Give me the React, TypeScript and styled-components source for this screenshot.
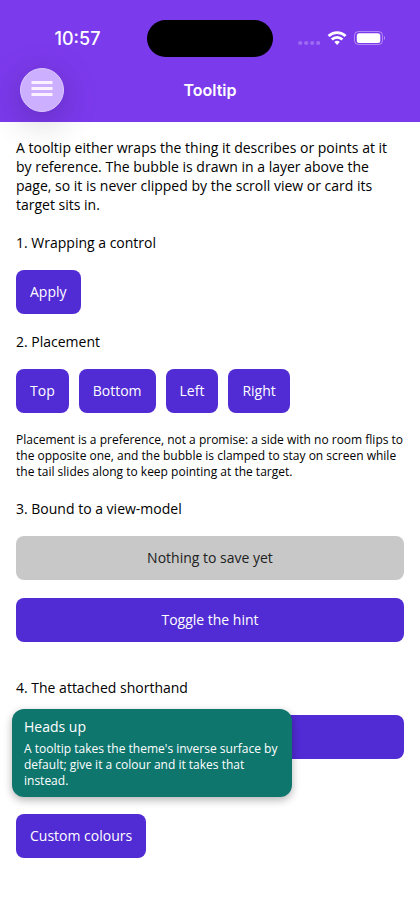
import React from "react";
import styled, { createGlobalStyle } from "styled-components";

const GlobalStyle = createGlobalStyle`
  *, *::before, *::after { box-sizing: border-box; }
  body {
    margin: 0;
    background: #ffffff;
    color: #000000;
    font-family: "Open Sans", sans-serif;
    font-size: 14px;
    line-height: 19px;
  }
  button { font: inherit; cursor: pointer; }
  h1, h2, p { margin: 0; font-size: inherit; font-weight: 400; }
`;

const Header = styled.header`
  background: #7c3aed;
  color: #ffffff;
  font-family: Inter, sans-serif;
  font-weight: 600;
`;

const StatusBar = styled.div`
  display: grid;
  grid-template-columns: 1fr 126px 1fr;
  align-items: center;
  padding-top: 20px;
`;

const Clock = styled.time`
  justify-self: center;
  padding-left: 8px;
  font-size: 18px;
  font-weight: 500;
  line-height: 20px;
`;

const Island = styled.div`
  height: 37px;
  border-radius: 19px;
  background: #000000;
`;

const Indicators = styled.div`
  display: flex;
  justify-content: flex-end;
  padding-right: 34px;
`;

const NavBar = styled.div`
  display: grid;
  grid-template-columns: 44px 1fr 44px;
  align-items: center;
  padding: 11px 20px 10px;
`;

const MenuButton = styled.button`
  display: grid;
  place-items: center;
  width: 44px;
  height: 44px;
  padding: 0 0 2px;
  border: 1px solid #dcc8ff;
  border-radius: 50%;
  background: #ccb0ff;
  box-shadow: 0 8px 36px rgba(0, 0, 0, 0.24);
`;

const Title = styled.h1`
  text-align: center;
  && {
    font-size: 16px;
    font-weight: 600;
  }
  line-height: 20px;
`;

const Content = styled.main`
  display: flex;
  flex-direction: column;
  gap: 18px;
  padding: 16px 16px 54px;
`;

const Intro = styled.p`
  padding-bottom: 1px;
`;

const Note = styled.p`
  padding: 1px 0;
  && {
    font-size: 12px;
  }
  line-height: 16px;
`;

const Button = styled.button<{ $muted?: boolean }>`
  min-height: 44px;
  padding: 0 14px 1px;
  border: 0;
  border-radius: 8px;
  background: ${(p) => (p.$muted ? "#c8c8c8" : "#512bd4")};
  color: ${(p) => (p.$muted ? "#212121" : "#ffffff")};
`;

const ButtonRow = styled.div`
  display: flex;
  flex-wrap: wrap;
  gap: 10px;
`;

const Section = styled.section<{ $spaced?: boolean }>`
  display: flex;
  flex-direction: column;
  gap: 18px;
  margin-top: ${(p) => (p.$spaced ? "18px" : "0")};
`;

const Target = styled.div`
  position: relative;
  align-self: flex-start;
  margin-top: 37px;
`;

const Bubble = styled.div`
  position: absolute;
  bottom: calc(100% + 17px);
  left: -4px;
  width: 280px;
  padding: 8px 12px;
  border-radius: 12px;
  background: #0f766e;
  color: #ffffff;
  box-shadow: 0 3px 8px rgba(0, 0, 0, 0.3);
`;

const BubbleText = styled.p`
  margin-top: 5px;
  && {
    font-size: 12px;
  }
  line-height: 16px;
`;

function StatusIcons() {
  return (
    <svg width="88" height="18" viewBox="0 0 88 18" fill="none" aria-hidden="true">
      <g fill="#ffffff" fillOpacity=".25">
        <circle cx="2.2" cy="13" r="2.1" />
        <circle cx="8.2" cy="13" r="2.1" />
        <circle cx="14.2" cy="13" r="2.1" />
        <circle cx="20.2" cy="13" r="2.1" />
      </g>
      <g stroke="#ffffff" strokeWidth="2.8">
        <path d="M30.6 6.1a12.3 12.3 0 0 1 17 0" />
        <path d="M33.8 9.4a7.7 7.7 0 0 1 10.6 0" />
      </g>
      <path d="M36.4 12a4 4 0 0 1 5.4 0L39.1 14.9Z" fill="#ffffff" />
      <rect x="56.5" y="1.5" width="28" height="13" rx="4" stroke="#ffffff" strokeOpacity=".4" />
      <rect x="58.8" y="3.2" width="23.5" height="9.8" rx="2.5" fill="#ffffff" />
      <path d="M86 6v4c1.3-.5 1.3-3.5 0-4Z" fill="#ffffff" fillOpacity=".5" />
    </svg>
  );
}

function MenuIcon() {
  return (
    <svg width="22" height="18" viewBox="0 0 22 18" aria-hidden="true">
      <path d="M.5 1h21v3H.5zM.5 7h21v3H.5zM.5 13h21v3H.5z" fill="#fcf1ff" />
    </svg>
  );
}

const placements = ["Top", "Bottom", "Left", "Right"];

export default function App() {
  return (
    <>
      <GlobalStyle />
      <Header>
        <StatusBar>
          <Clock>10:57</Clock>
          <Island />
          <Indicators>
            <StatusIcons />
          </Indicators>
        </StatusBar>
        <NavBar>
          <MenuButton type="button" aria-label="Menu">
            <MenuIcon />
          </MenuButton>
          <Title>Tooltip</Title>
        </NavBar>
      </Header>
      <Content>
        <Intro>
          A tooltip either wraps the thing it describes or points at it by reference. The bubble is
          drawn in a layer above the page, so it is never clipped by the scroll view or card its
          target sits in.
        </Intro>
        <Section>
          <h2>1. Wrapping a control</h2>
          <ButtonRow>
            <Button type="button">Apply</Button>
          </ButtonRow>
        </Section>
        <Section>
          <h2>2. Placement</h2>
          <ButtonRow>
            {placements.map((side) => (
              <Button type="button" key={side}>
                {side}
              </Button>
            ))}
          </ButtonRow>
          <Note>
            Placement is a preference, not a promise: a side with no room flips to the opposite one,
            and the bubble is clamped to stay on screen while the tail slides along to keep pointing
            at the target.
          </Note>
        </Section>
        <Section>
          <h2>3. Bound to a view-model</h2>
          <Button type="button" $muted disabled>
            Nothing to save yet
          </Button>
          <Button type="button">Toggle the hint</Button>
        </Section>
        <Section $spaced>
          <h2>4. The attached shorthand</h2>
          <Button type="button" aria-label="Attached shorthand" />
        </Section>
        <Target>
          <Button type="button" aria-describedby="colours-tip">
            Custom colours
          </Button>
          <Bubble role="tooltip" id="colours-tip">
            <p>Heads up</p>
            <BubbleText>
              A tooltip takes the theme's inverse surface by default; give it a colour and it takes
              that instead.
            </BubbleText>
          </Bubble>
        </Target>
      </Content>
    </>
  );
}
